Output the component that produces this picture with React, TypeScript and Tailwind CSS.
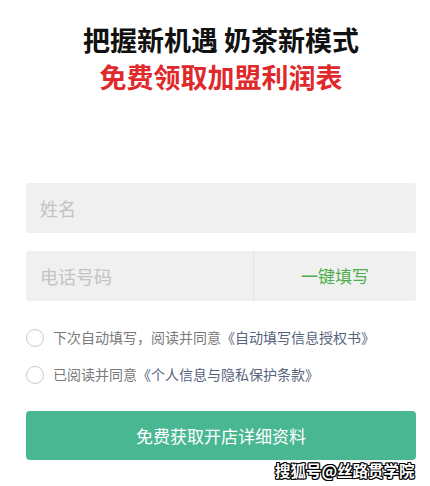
import React from "react";

export default function App() {
  const font = { fontFamily: '"Noto Sans CJK SC", "Noto Sans", sans-serif' };
  return (
    <div
      className="relative w-[430px] h-[486px] bg-white overflow-hidden pl-[26px] pr-[14px]"
      style={font}
    >
      <div className="pt-[21px] flex flex-col items-center">
        <div className="text-[27px] leading-[37px] font-bold text-[#111]">把握新机遇 奶茶新模式</div>
        <div className="text-[27px] leading-[37px] font-bold text-[#e0292b]">免费领取加盟利润表</div>
      </div>

      <div className="mt-[88px] flex flex-col">
        <div className="h-[50px] rounded-[3px] bg-[#f0f0f0] flex items-center pl-[14px] text-[18px] text-[#c3c3c3]">
          姓名
        </div>
        <div className="mt-[18px] h-[50px] rounded-[3px] bg-[#f0f0f0] flex">
          <div className="w-[228px] flex items-center pl-[14px] text-[18px] text-[#c3c3c3] border-r border-[#e4e4e4]">
            电话号码
          </div>
          <div className="flex-1 flex items-center justify-center text-[17px] text-[#4fae4b]">一键填写</div>
        </div>

        <div className="mt-[18px] flex flex-col">
          <div className="h-[37px] flex items-center">
            <span className="w-[18px] h-[18px] rounded-full border border-[#c9c9c9] box-border" />
            <span className="ml-[9px] text-[14px] text-[#7a7a7a]">
              下次自动填写，阅读并同意<span className="text-[#57637d]">《自动填写信息授权书》</span>
            </span>
          </div>
          <div className="h-[37px] flex items-center">
            <span className="w-[18px] h-[18px] rounded-full border border-[#c9c9c9] box-border" />
            <span className="ml-[9px] text-[14px] text-[#7a7a7a]">
              已阅读并同意<span className="text-[#57637d]">《个人信息与隐私保护条款》</span>
            </span>
          </div>
        </div>

        <div className="mt-[18px] h-[49px] rounded-[4px] bg-[#48b792] flex items-center justify-center text-[17px] text-white">
          免费获取开店详细资料
        </div>
      </div>

      <div className="absolute left-[275px] top-[460px] text-[15.5px] leading-[20px] font-bold text-white [text-shadow:1px_0_0_#000,-1px_0_0_#000,0_1px_0_#000,0_-1px_0_#000,1px_1px_0_#000,-1px_-1px_0_#000,1px_-1px_0_#000,-1px_1px_0_#000]">
        搜狐号@丝路贯学院
      </div>
    </div>
  );
}
